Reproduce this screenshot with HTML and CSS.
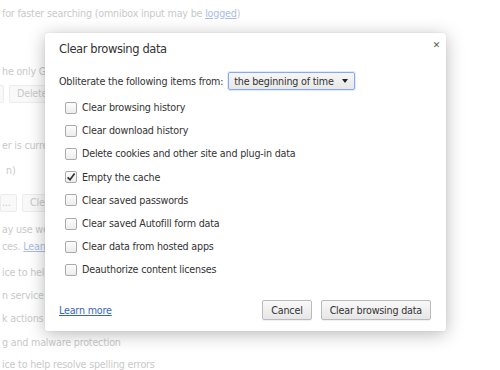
FILE: index.html
```html
<!DOCTYPE html>
<html lang="en">
<head>
  <meta charset="UTF-8">
  <title>Clear browsing data</title>
  <link rel="stylesheet" href="styles.css">
</head>
<body>
  <div class="page">
    <div class="line l1">for faster searching (omnibox input may be <a class="bg-link">logged</a>)</div>
    <div class="line l2">he only G</div>
    <div class="btn-row r1"><span class="bg-btn b-narrow"></span><span class="bg-btn b-cut">Delete</span></div>
    <div class="line l3">er is curre</div>
    <div class="line l4">n)</div>
    <div class="btn-row r2"><span class="bg-btn b-dots">...</span><span class="bg-btn b-cut">Cle</span></div>
    <div class="line l5">ay use wel</div>
    <div class="line l6">ces. <a class="bg-link">Learn</a></div>
    <div class="line l7">ice to help</div>
    <div class="line l8">n service t</div>
    <div class="line l9">k actions t</div>
    <div class="line l10">g and malware protection</div>
    <div class="line l11">ice to help resolve spelling errors</div>
  </div>

  <div class="dialog">
    <div class="dialog-head">
      <h1>Clear browsing data</h1>
      <span class="close">&#x2715;</span>
    </div>
    <div class="range">
      <span>Obliterate the following items from:</span>
      <span class="select">the beginning of time <span class="caret"></span></span>
    </div>
    <ul class="items">
      <li><span class="box"></span>Clear browsing history</li>
      <li><span class="box"></span>Clear download history</li>
      <li><span class="box"></span>Delete cookies and other site and plug-in data</li>
      <li><span class="box checked"><svg width="10" height="10" viewBox="0 0 10 10"><path d="M1.6 5.3 L4 7.7 L8.6 1.4" fill="none" stroke="#333" stroke-width="1.7"/></svg></span>Empty the cache</li>
      <li><span class="box"></span>Clear saved passwords</li>
      <li><span class="box"></span>Clear saved Autofill form data</li>
      <li><span class="box"></span>Clear data from hosted apps</li>
      <li><span class="box"></span>Deauthorize content licenses</li>
    </ul>
    <div class="dialog-foot">
      <a class="learn">Learn more</a>
      <div class="actions">
        <button>Cancel</button>
        <button>Clear browsing data</button>
      </div>
    </div>
  </div>
</body>
</html>
```

FILE: styles.css
```css
html, body {
  margin: 0;
  padding: 0;
  background: #fff;
  width: 500px;
  height: 370px;
  overflow: hidden;
}
body {
  font-family: "DejaVu Sans", "Liberation Sans", sans-serif;
  font-size: 9.6px;
  letter-spacing: -0.2px;
  color: #c9c9c9;
  position: relative;
}
.page {
  display: flex;
  flex-direction: column;
  align-items: flex-start;
  padding-left: 2px;
  white-space: nowrap;
}
.line {
  height: 14px;
  line-height: 14px;
}
.bg-link {
  color: #a9bde6;
  text-decoration: underline;
}
.l1 { margin-top: 7px; }
.l2 { margin-top: 44px; }
.btn-row {
  display: flex;
  gap: 5px;
  margin-left: -2px;
}
.r1 { margin-top: 6px; }
.r2 { margin-top: 16px; }
.bg-btn {
  flex: none;
  height: 16px;
  line-height: 16px;
  padding: 0 7px;
  border: 1px solid #ececec;
  border-radius: 2px;
  background: #f9f9f9;
}
.b-narrow { width: 3px; padding: 0; border-left: none; border-radius: 0 2px 2px 0; }
.b-dots { width: 14px; padding: 0 0 0 1px; }
.b-cut { border-right: none; border-radius: 2px 0 0 2px; padding-right: 8px; }
.l3 { margin-top: 36px; }
.l4 { margin-top: 11px; padding-left: 4px; }
.l5 { margin-top: 11px; }
.l6 { margin-top: 3px; }
.l7 { margin-top: 12px; }
.l8 { margin-top: 9px; }
.l9 { margin-top: 9px; }
.l10 { margin-top: 10px; }
.l11 { margin-top: 8px; }

.dialog {
  position: absolute;
  left: 45px;
  top: 33px;
  width: 401px;
  height: 298px;
  box-sizing: border-box;
  background: #fff;
  border-radius: 2px;
  box-shadow: 0 3px 18px rgba(0,0,0,.28), 0 0 1px rgba(0,0,0,.2);
  padding: 8px 15px 11px 14px;
  display: flex;
  flex-direction: column;
  color: #333;
}
.dialog-head {
  display: flex;
  justify-content: space-between;
  align-items: flex-start;
  height: 23px;
}
.dialog-head h1 {
  margin: 0;
  font-size: 11.5px;
  letter-spacing: -0.4px;
  font-weight: normal;
  line-height: 16px;
  color: #333;
}
.close {
  font-size: 9px;
  color: #555;
  margin-top: -1px;
  margin-right: -9px;
}
.range {
  display: flex;
  align-items: center;
  gap: 5px;
  margin-top: 8px;
}
.select {
  display: flex;
  align-items: center;
  gap: 8px;
  height: 18px;
  box-sizing: border-box;
  padding: 0 6px 0 5px;
  border: 1px solid #86aaf0;
  border-radius: 2px;
  background: linear-gradient(#f7f7f7, #e7e7e7);
  box-shadow: 0 0 0 1px rgba(134,170,240,.25);
}
.caret {
  width: 0;
  height: 0;
  border-left: 3.5px solid transparent;
  border-right: 3.5px solid transparent;
  border-top: 4px solid #222;
}
.items {
  list-style: none;
  margin: 6px 0 0 6px;
  padding: 0;
}
.items li {
  display: flex;
  align-items: center;
  gap: 5px;
  height: 23.2px;
}
.box {
  width: 12px;
  height: 12px;
  box-sizing: border-box;
  border: 1px solid #aaa;
  border-radius: 2px;
  background: linear-gradient(#fdfdfd, #ececec);
  display: flex;
  align-items: center;
  justify-content: center;
}
.dialog-foot {
  margin-top: auto;
  display: flex;
  justify-content: space-between;
  align-items: center;
}
.learn {
  color: #3864c4;
  text-decoration: underline;
}
.actions {
  display: flex;
  gap: 9px;
}
.actions button {
  font-family: inherit;
  font-size: 9.6px;
  letter-spacing: -0.2px;
  color: #333;
  height: 20px;
  padding: 0 8px;
  border: 1px solid #bbb;
  border-radius: 2px;
  background: linear-gradient(#f9f9f9, #e6e6e6);
  box-shadow: 0 1px 0 rgba(0,0,0,.06);
}
```
